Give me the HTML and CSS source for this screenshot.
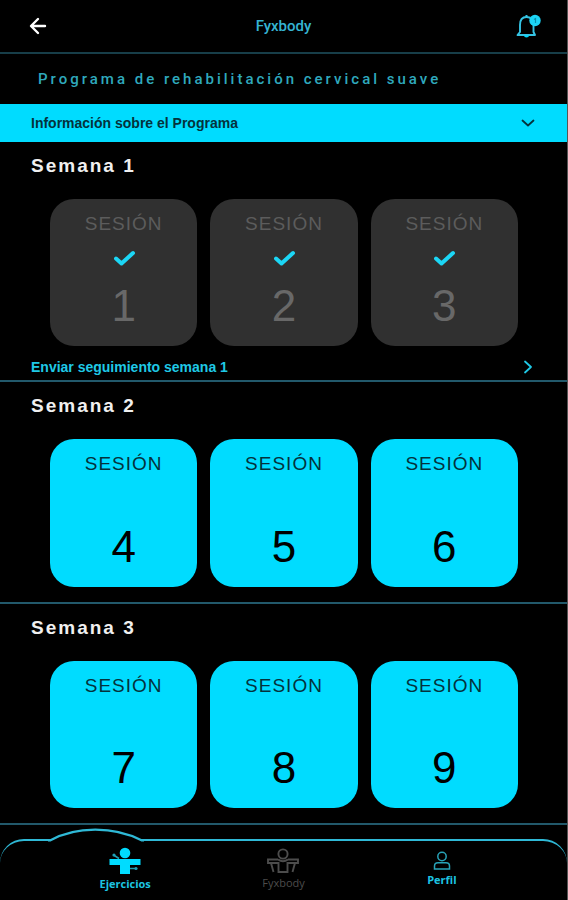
FILE: index.html
```html
<!DOCTYPE html>
<html lang="es">
<head>
    <meta charset="UTF-8">
    <meta name="viewport" content="width=device-width, initial-scale=1.0">
    <title>Fyxbody</title>
    <link rel="stylesheet" href="styles.css">
</head>
<body>
    <!-- Header -->
    <header class="header">
        <button class="icon-button" type="button" aria-label="Volver">
            <svg width="18" height="18" viewBox="0 0 18 18" fill="none" stroke="#fff" stroke-width="2.4" stroke-linecap="round" stroke-linejoin="round">
                <path d="M9 2 L2 9 L9 16 M2.500 9 H16"/>
            </svg>
        </button>
        <h1 class="brand">Fyxbody</h1>
        <button class="icon-button" type="button" aria-label="Notificaciones">
            <svg width="26" height="26" viewBox="0 0 26 26" fill="none">
                <path d="M1.500 22 H19 L17.500 19 V12 C17.500 7 14.500 4 10.500 4 C6.500 4 4 7 4 12 V19 Z" stroke="#35c3e3" stroke-width="1.9" stroke-linejoin="round"/>
                <path d="M10.500 2 V4" stroke="#35c3e3" stroke-width="2"/>
                <path d="M8 22.500 A2.500 2 0 0 0 13 22.500 Z" fill="#00dcff"/>
                <circle cx="19" cy="7.500" r="5.700" fill="#1cd4f5"/>
                <path d="M18 6.500 L19.500 5.500 V10" stroke="#0a8fae" stroke-width="1.2"/>
            </svg>
        </button>
    </header>

    <main>
        <h2 class="program-title">Programa de rehabilitación cervical suave</h2>

        <button class="program-info" type="button" aria-expanded="false">
            <span>Información sobre el Programa</span>
            <svg width="14" height="8" viewBox="0 0 14 8" fill="none" stroke="#04323c" stroke-width="1.8" stroke-linecap="round" stroke-linejoin="round">
                <path d="M1.500 1.500 L7 6.500 L12.500 1.500"/>
            </svg>
        </button>

        <!-- Week 1 -->
        <section class="week">
            <h3>Semana 1</h3>
            <div class="sessions">
                <button class="session done" type="button">
                    <span class="label">SESIÓN</span>
                    <svg class="check" viewBox="0 0 24 18"><path d="M4 9.500 L9.500 14.500 L21 4"/></svg>
                    <span class="number">1</span>
                </button>
                <button class="session done" type="button">
                    <span class="label">SESIÓN</span>
                    <svg class="check" viewBox="0 0 24 18"><path d="M4 9.500 L9.500 14.500 L21 4"/></svg>
                    <span class="number">2</span>
                </button>
                <button class="session done" type="button">
                    <span class="label">SESIÓN</span>
                    <svg class="check" viewBox="0 0 24 18"><path d="M4 9.500 L9.500 14.500 L21 4"/></svg>
                    <span class="number">3</span>
                </button>
            </div>
            <a class="follow-up" href="#">
                <span>Enviar seguimiento semana 1</span>
                <svg width="10" height="14" viewBox="0 0 10 14" fill="none" stroke="#1fc9e6" stroke-width="1.8" stroke-linecap="round" stroke-linejoin="round">
                    <path d="M2 1.500 L8 7 L2 12.500"/>
                </svg>
            </a>
        </section>

        <!-- Week 2 -->
        <section class="week">
            <h3>Semana 2</h3>
            <div class="sessions">
                <button class="session" type="button">
                    <span class="label">SESIÓN</span>
                    <span class="number">4</span>
                </button>
                <button class="session" type="button">
                    <span class="label">SESIÓN</span>
                    <span class="number">5</span>
                </button>
                <button class="session" type="button">
                    <span class="label">SESIÓN</span>
                    <span class="number">6</span>
                </button>
            </div>
        </section>

        <!-- Week 3 -->
        <section class="week">
            <h3>Semana 3</h3>
            <div class="sessions">
                <button class="session" type="button">
                    <span class="label">SESIÓN</span>
                    <span class="number">7</span>
                </button>
                <button class="session" type="button">
                    <span class="label">SESIÓN</span>
                    <span class="number">8</span>
                </button>
                <button class="session" type="button">
                    <span class="label">SESIÓN</span>
                    <span class="number">9</span>
                </button>
            </div>
        </section>
    </main>

    <!-- Bottom navigation -->
    <nav class="tabs">
        <svg class="bump" width="96" height="14" viewBox="0 0 96 14">
            <path d="M2 14 V12.500 C28 -2 66 -2 94 12.500 V14 Z" fill="#000"/>
            <path d="M0 12.500 H2 C28 -2 66 -2 94 12.500 H96" fill="none" stroke="#2fb9d6" stroke-width="2.200"/>
        </svg>
        <a class="tab active" href="#">
            <svg width="32" height="28" viewBox="0 0 32 28">
                <g fill="#00dcff">
                    <circle cx="16" cy="6" r="5.300"/>
                    <path d="M0.500 12 H31.500 V18 H21 V27 H11 V18 H0.500 Z"/>
                </g>
                <path d="M4.500 8 L10 11.500 M21 21.500 H27" fill="none" stroke="#1e9fb5" stroke-width="1.500"/>
                <circle cx="5" cy="8" r="1.600" fill="#1e9fb5"/>
                <circle cx="27" cy="21.500" r="1.600" fill="#1e9fb5"/>
            </svg>
            <span>Ejercicios</span>
        </a>
        <a class="tab muted" href="#">
            <svg width="32" height="26" viewBox="0 0 32 26" fill="none" stroke="#4c4c4c" stroke-width="1.900">
                <circle cx="16" cy="6" r="4.600"/>
                <path d="M11 11.500 H1 V15 H4 L6.500 24 M21 11.500 H31 V15 H28 L25.500 24 M4 15 H11.500 V24 H20.500 V15 H28 M11 11.500 C14 13.500 18 13.500 21 11.500"/>
            </svg>
            <span>Fyxbody</span>
        </a>
        <a class="tab" href="#">
            <svg width="18" height="20" viewBox="0 0 18 20" fill="none" stroke="#28a3b8" stroke-width="1.500">
                <circle cx="9" cy="5.500" r="4.200"/>
                <path d="M1.500 18 V15 C1.500 13 3 11.800 5 11.800 H13 C15 11.800 16.500 13 16.500 15 V18 Z"/>
            </svg>
            <span>Perfil</span>
        </a>
    </nav>
</body>
</html>
```

FILE: styles.css
```css
* {
    box-sizing: border-box;
}

body {
    display: flex;
    flex-direction: column;
    min-height: 100vh;
    margin: 0;
    background-color: #000;
    border-right: 1px solid #555;
    color: #fff;
    font-family: "Liberation Sans", Arial, sans-serif;
}

button {
    border: none;
    font-family: inherit;
    cursor: pointer;
}

a {
    text-decoration: none;
}

h1, h2, h3 {
    margin: 0;
}

/* Header */
.header {
    display: flex;
    justify-content: space-between;
    align-items: center;
    height: 54px;
    padding: 0 24px;
    border-bottom: 2px solid #173e49;
}

.icon-button {
    display: flex;
    justify-content: center;
    align-items: center;
    width: 28px;
    height: 28px;
    padding: 0;
    background: none;
}

.brand {
    color: #35b4d2;
    font-family: Roboto, sans-serif;
    font-size: 15px;
    font-weight: 500;
}

.program-title {
    padding: 0 38px;
    color: #2fa9bd;
    font-family: Roboto, sans-serif;
    font-size: 15px;
    font-weight: 500;
    line-height: 50px;
    letter-spacing: 3px;
}

.program-info {
    display: flex;
    justify-content: space-between;
    align-items: center;
    width: 100%;
    height: 38px;
    padding: 0 32px 0 31px;
    background-color: #00dcff;
    color: #04323c;
    font-size: 14px;
    font-weight: bold;
}

/* Weeks */
.week {
    padding-bottom: 15px;
    border-bottom: 2px solid #22596b;
}

.week:has(.follow-up) {
    padding-bottom: 0;
}

.week h3 {
    padding: 0 31px 9px;
    color: #f0f0f0;
    font-size: 19px;
    line-height: 48px;
    letter-spacing: 2px;
}

.sessions {
    display: grid;
    grid-template-columns: repeat(3, 1fr);
    gap: 13px;
    padding: 0 49px 0 50px;
}

.session {
    display: flex;
    flex-direction: column;
    justify-content: space-between;
    align-items: center;
    aspect-ratio: 1;
    padding: 15px 0;
    border-radius: 24px;
    background-color: #00dcff;
    color: #000;
}

.session .label {
    color: #04323c;
    font-size: 19px;
    line-height: 20px;
    letter-spacing: 1px;
}

.session .number {
    font-size: 44px;
    line-height: 50px;
}

.session.done {
    background-color: #303030;
    color: #686868;
}

.session.done .label {
    color: #5c5c5c;
}

.check {
    width: 24px;
    height: 18px;
    fill: none;
    stroke: #1cd6f5;
    stroke-width: 4;
    stroke-linecap: round;
    stroke-linejoin: round;
}

.follow-up {
    display: flex;
    justify-content: space-between;
    align-items: center;
    padding: 8px 34px 0 31px;
    color: #1fc9e6;
    font-size: 14px;
    font-weight: bold;
    line-height: 26px;
}

/* Bottom navigation */
.tabs {
    position: relative;
    display: grid;
    grid-template-columns: repeat(3, 1fr);
    flex: 1;
    margin-top: 14px;
    padding: 6px 46px 0;
    border-top: 2px solid #2fb9d6;
    border-radius: 24px 24px 0 0;
}

.bump {
    position: absolute;
    top: -13px;
    left: 48px;
}

.tab {
    display: flex;
    flex-direction: column;
    justify-content: center;
    align-items: center;
    gap: 1px;
    height: 46px;
    color: #1cc4e2;
    font-family: "Open Sans", sans-serif;
    font-size: 11px;
    font-weight: bold;
    line-height: 16px;
}

.tab.muted {
    color: #4c4c4c;
    font-weight: normal;
}
```
